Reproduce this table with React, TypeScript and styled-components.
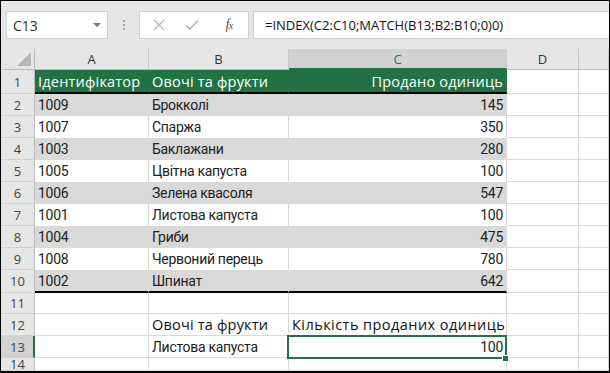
import React from "react";
import styled, { createGlobalStyle, css } from "styled-components";

const GlobalStyle = createGlobalStyle`
  html, body { margin: 0; padding: 0; background: #fff; }
  body { font-family: "Open Sans", "Noto Sans", sans-serif; }
  * { box-sizing: border-box; }
`;

const Frame = styled.div`
  width: 610px;
  height: 373px;
  border: 1px solid #000;
  border-bottom-width: 2px;
  background: #e6e6e6;
  display: flex;
  flex-direction: column;
  overflow: hidden;
`;

const FormulaBar = styled.div`
  height: 48px;
  flex: none;
  display: flex;
  align-items: flex-start;
  padding: 10px 0 0 5px;
`;

const NameBox = styled.div`
  width: 102px;
  height: 28px;
  background: #fff;
  border: 1px solid #cfcfcf;
  display: flex;
  align-items: center;
  justify-content: space-between;
  padding: 0 6px 0 6px;
  font-family: "Open Sans", "Noto Sans", sans-serif;
  font-size: 14px;
  color: #333;
`;

const Caret = styled.span`
  width: 0;
  height: 0;
  border-left: 4px solid transparent;
  border-right: 4px solid transparent;
  border-top: 4px solid #777;
`;

const Dots = styled.div`
  width: 31px;
  height: 28px;
  display: flex;
  flex-direction: column;
  align-items: center;
  justify-content: center;
  gap: 2px;
  span {
    width: 2px;
    height: 2px;
    background: #a6a6a6;
  }
`;

const ButtonBox = styled.div`
  width: 110px;
  height: 28px;
  background: #fff;
  border: 1px solid #cfcfcf;
  display: flex;
  align-items: center;
  padding-left: 11px;
`;

const IconSlot = styled.div<{ $w: number }>`
  width: ${(p) => p.$w}px;
  height: 26px;
  display: flex;
  align-items: center;
  justify-content: center;
`;

const Fx = styled.span`
  font-family: "Liberation Serif", "DejaVu Serif", serif;
  font-style: italic;
  font-size: 14px;
  color: #555;
  letter-spacing: -1px;
  sub {
    font-size: 11px;
    vertical-align: baseline;
  }
`;

const FormulaInput = styled.div`
  flex: 1;
  margin-left: 4px;
  height: 28px;
  background: #fff;
  border: 1px solid #cfcfcf;
  border-right: none;
  display: flex;
  align-items: center;
  padding-left: 11px;
  font-family: "Open Sans", "Noto Sans", sans-serif;
  font-size: 13px;
  color: #111;
  white-space: nowrap;
`;

const Sheet = styled.div`
  position: relative;
  display: grid;
  grid-template-columns: 34px 114px 140px 218px 72px 30px;
  grid-template-rows: 21px 24px repeat(8, 22px) 23px 21px 22px 22px 13px;
  background: #fff;
`;

const Corner = styled.div`
  background: #e6e6e6;
  border-right: 1px solid #bdbdbd;
  border-bottom: 1px solid #bdbdbd;
  display: flex;
  align-items: flex-end;
  justify-content: flex-end;
  padding: 0 3px 3px 0;
`;

const ColHead = styled.div<{ $sel?: boolean }>`
  background: ${(p) => (p.$sel ? "#d2d2d2" : "#e6e6e6")};
  border-right: 1px solid #c8c8c8;
  border-bottom: ${(p) => (p.$sel ? "2px solid #217346" : "1px solid #bdbdbd")};
  display: flex;
  align-items: center;
  justify-content: center;
  font-family: "Open Sans", "Noto Sans", sans-serif;
  font-size: 13px;
  color: ${(p) => (p.$sel ? "#217346" : "#333")};
  padding-top: ${(p) => (p.$sel ? "1px" : "0")};
`;

const RowHead = styled.div<{ $sel?: boolean }>`
  background: ${(p) => (p.$sel ? "#d2d2d2" : "#e6e6e6")};
  border-right: ${(p) => (p.$sel ? "2px solid #217346" : "1px solid #bdbdbd")};
  border-bottom: 1px solid #d0d0d0;
  display: flex;
  align-items: center;
  justify-content: center;
  font-family: "Open Sans", "Noto Sans", sans-serif;
  font-size: 13px;
  color: #444;
  padding-left: ${(p) => (p.$sel ? "1px" : "0")};
`;

type Fill = "none" | "gray" | "green" | "plain";

const Cell = styled.div<{
  $fill?: Fill;
  $thick?: boolean;
  $right?: boolean;
  $head?: boolean;
  $wide?: boolean;
}>`
  display: flex;
  align-items: center;
  justify-content: ${(p) => (p.$right ? "flex-end" : "flex-start")};
  padding: 0 3px 0 3px;
  white-space: nowrap;
  overflow: visible;
  background: #fff;
  border-right: 1px solid #d9d9d9;
  border-bottom: 1px solid #d9d9d9;
  font-family: ${(p) =>
    p.$head ? `"Open Sans", "Noto Sans", sans-serif` : `Roboto, "Noto Sans", sans-serif`};
  font-size: ${(p) => (p.$head ? "14.5px" : "14px")};
  color: ${(p) => (p.$head ? "#111" : "#222")};
  letter-spacing: ${(p) => (p.$wide ? "0.45px" : p.$head ? "0.2px" : "-0.3px")};
  ${(p) =>
    p.$fill === "gray" &&
    css`
      background: #d9d9d9;
      border-color: #d9d9d9;
    `}
  ${(p) =>
    p.$fill === "plain" &&
    css`
      border-bottom-color: #fff;
    `}
  ${(p) =>
    p.$fill === "green" &&
    css`
      background: #217346;
      border-color: #217346;
      color: #fff;
    `}
  ${(p) =>
    p.$thick &&
    css`
      border-bottom: 2px solid #000;
    `}
`;

const Selection = styled.div`
  position: absolute;
  left: 286px;
  top: 286px;
  width: 220px;
  height: 24px;
  border: 2px solid #217346;
  pointer-events: none;
`;

const Handle = styled.div`
  position: absolute;
  left: 501px;
  top: 306px;
  width: 7px;
  height: 7px;
  background: #217346;
  border: 1px solid #fff;
`;

const data: [string, string, string][] = [
  ["1009", "Брокколі", "145"],
  ["1007", "Спаржа", "350"],
  ["1003", "Баклажани", "280"],
  ["1005", "Цвітна капуста", "100"],
  ["1006", "Зелена квасоля", "547"],
  ["1001", "Листова капуста", "100"],
  ["1004", "Гриби", "475"],
  ["1008", "Червоний перець", "780"],
  ["1002", "Шпинат", "642"],
];

const cols = ["A", "B", "C", "D", ""];

export default function App() {
  return (
    <>
      <GlobalStyle />
      <Frame>
        <FormulaBar>
          <NameBox>
            <span>C13</span>
            <Caret />
          </NameBox>
          <Dots>
            <span />
            <span />
            <span />
          </Dots>
          <ButtonBox>
            <IconSlot $w={16}>
              <svg width="12" height="12" viewBox="0 0 12 12">
                <path d="M1 1 L11 11 M11 1 L1 11" stroke="#b3b3b3" strokeWidth="1.3" />
              </svg>
            </IconSlot>
            <IconSlot $w={50}>
              <svg width="14" height="12" viewBox="0 0 14 12">
                <path d="M1 6.5 L5 10 L13 1.5" stroke="#b3b3b3" strokeWidth="1.6" fill="none" />
              </svg>
            </IconSlot>
            <IconSlot $w={24}>
              <Fx>
                f<sub>x</sub>
              </Fx>
            </IconSlot>
          </ButtonBox>
          <FormulaInput>=INDEX(C2:C10;MATCH(B13;B2:B10;0)0)</FormulaInput>
        </FormulaBar>
        <Sheet>
          <Corner>
            <svg width="14" height="14" viewBox="0 0 14 14">
              <polygon points="14,0 14,14 0,14" fill="#b8b8b8" />
            </svg>
          </Corner>
          {cols.map((c, i) => (
            <ColHead key={"h" + i} $sel={c === "C"}>
              {c}
            </ColHead>
          ))}

          <RowHead>1</RowHead>
          <Cell $fill="green" $thick $head>
            Ідентифікатор
          </Cell>
          <Cell $fill="green" $thick $head>
            Овочі та фрукти
          </Cell>
          <Cell $fill="green" $thick $head $right>
            Продано одиниць
          </Cell>
          <Cell />
          <Cell />

          {data.map((r, i) => {
            const n = i + 2;
            const fill: Fill = n % 2 === 0 ? "gray" : "plain";
            const thick = n === 10;
            return (
              <React.Fragment key={n}>
                <RowHead>{n}</RowHead>
                <Cell $fill={fill} $thick={thick}>
                  {r[0]}
                </Cell>
                <Cell $fill={fill} $thick={thick}>
                  {r[1]}
                </Cell>
                <Cell $fill={fill} $thick={thick} $right>
                  {r[2]}
                </Cell>
                <Cell />
                <Cell />
              </React.Fragment>
            );
          })}

          <RowHead>11</RowHead>
          <Cell />
          <Cell />
          <Cell />
          <Cell />
          <Cell />

          <RowHead>12</RowHead>
          <Cell />
          <Cell $head>Овочі та фрукти</Cell>
          <Cell $head $wide>
            Кількість проданих одиниць
          </Cell>
          <Cell />
          <Cell />

          <RowHead $sel>13</RowHead>
          <Cell />
          <Cell>Листова капуста</Cell>
          <Cell $right>100</Cell>
          <Cell />
          <Cell />

          <RowHead>14</RowHead>
          <Cell />
          <Cell />
          <Cell />
          <Cell />
          <Cell />

          <Selection />
          <Handle />
        </Sheet>
      </Frame>
    </>
  );
}
